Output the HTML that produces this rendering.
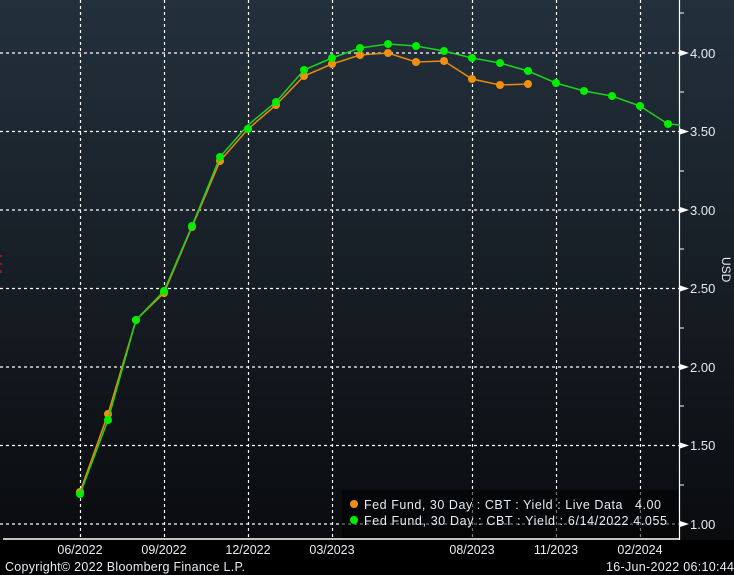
<!DOCTYPE html>
<html><head><style>
html,body{margin:0;padding:0;background:#000;}
svg{display:block;font-family:"Liberation Sans","DejaVu Sans",sans-serif;}
</style></head><body>
<svg width="734" height="575" viewBox="0 0 734 575" xmlns="http://www.w3.org/2000/svg">
<defs>
<linearGradient id="bg" x1="0" y1="0" x2="0" y2="1">
<stop offset="0" stop-color="#23303c"/>
<stop offset="0.5" stop-color="#161d24"/>
<stop offset="1" stop-color="#08090b"/>
</linearGradient>
</defs>
<rect x="0" y="0" width="734" height="575" fill="url(#bg)"/>
<rect x="0" y="540" width="734" height="35" fill="#000"/>
<g stroke="#fff" stroke-width="1.2" stroke-dasharray="3,3" fill="none">
<line x1="0" y1="53" x2="679" y2="53"/>
<line x1="0" y1="131.5" x2="679" y2="131.5"/>
<line x1="0" y1="210" x2="679" y2="210"/>
<line x1="0" y1="288.5" x2="679" y2="288.5"/>
<line x1="0" y1="367" x2="679" y2="367"/>
<line x1="0" y1="445.5" x2="679" y2="445.5"/>
<line x1="0" y1="524" x2="679" y2="524"/>
<line x1="80.5" y1="0" x2="80.5" y2="539"/>
<line x1="164.5" y1="0" x2="164.5" y2="539"/>
<line x1="248.5" y1="0" x2="248.5" y2="539"/>
<line x1="332.5" y1="0" x2="332.5" y2="539"/>
<line x1="472.5" y1="0" x2="472.5" y2="539"/>
<line x1="556.5" y1="0" x2="556.5" y2="539"/>
<line x1="640.5" y1="0" x2="640.5" y2="539"/>
</g>
<rect x="342" y="490" width="337" height="48" fill="#000" opacity="0.55"/>
<line x1="3" y1="539" x2="680" y2="539" stroke="#fff" stroke-width="1.5"/>
<line x1="679.5" y1="0" x2="679.5" y2="540" stroke="#fff" stroke-width="1.2"/>
<g stroke="#fff" stroke-width="1">
<line x1="679" y1="13" x2="684" y2="13"/><line x1="679" y1="92" x2="684" y2="92"/>
<line x1="679" y1="171" x2="684" y2="171"/><line x1="679" y1="249" x2="684" y2="249"/>
<line x1="679" y1="328" x2="684" y2="328"/><line x1="679" y1="406" x2="684" y2="406"/>
<line x1="679" y1="485" x2="684" y2="485"/>
</g>
<g fill="#fff">
<polygon points="680,50 689,53 680,56"/><polygon points="680,128.5 689,131.5 680,134.5"/>
<polygon points="680,207 689,210 680,213"/><polygon points="680,285.5 689,288.5 680,291.5"/>
<polygon points="680,364 689,367 680,370"/><polygon points="680,442.5 689,445.5 680,448.5"/>
<polygon points="680,521 689,524 680,527"/>
</g>
<g fill="#e6ecf2" font-size="13">
<text x="690" y="58">4.00</text><text x="690" y="136">3.50</text>
<text x="690" y="215">3.00</text><text x="690" y="293">2.50</text>
<text x="690" y="372">2.00</text><text x="690" y="450">1.50</text>
<text x="690" y="529">1.00</text>
<text transform="translate(722,257) rotate(90)" font-size="12">USD</text>
</g>
<g fill="#8a1c2a"><rect x="0" y="255" width="2" height="2"/><rect x="0" y="263" width="2" height="2"/><rect x="0" y="270" width="2" height="3"/></g>
<polyline fill="none" stroke="#e88a0a" stroke-width="1.5" points="80,492 108,414 136,320 164,293 192,227 220,161 248,129 276,105 304,76 332,64 360,55 388,53 416,62 444,61 472,79 500,85 528,84"/>
<g fill="#f09010">
<circle cx="80" cy="492" r="4"/><circle cx="108" cy="414" r="4"/><circle cx="136" cy="320" r="4"/><circle cx="164" cy="293" r="4"/><circle cx="192" cy="227" r="4"/><circle cx="220" cy="161" r="4"/><circle cx="248" cy="129" r="4"/><circle cx="276" cy="105" r="4"/><circle cx="304" cy="76" r="4"/><circle cx="332" cy="64" r="4"/><circle cx="360" cy="55" r="4"/><circle cx="388" cy="53" r="4"/><circle cx="416" cy="62" r="4"/><circle cx="444" cy="61" r="4"/><circle cx="472" cy="79" r="4"/><circle cx="500" cy="85" r="4"/><circle cx="528" cy="84" r="4"/>
</g>
<polyline fill="none" stroke="#1fd01f" stroke-width="1.5" points="80,494 108,420 136,320 164,291 192,226 220,157 248,125 276,102 304,70 332,58 360,48 388,44 416,46 444,51 472,58 500,63 528,71 556,83 584,91 612,96 640,106 668,124 680,125"/>
<g fill="#00ee00">
<circle cx="80" cy="494" r="4"/><circle cx="108" cy="420" r="4"/><circle cx="136" cy="320" r="4"/><circle cx="164" cy="291" r="4"/><circle cx="192" cy="226" r="4"/><circle cx="220" cy="157" r="4"/><circle cx="248" cy="129" r="4"/><circle cx="276" cy="102" r="4"/><circle cx="304" cy="70" r="4"/><circle cx="332" cy="58" r="4"/><circle cx="360" cy="48" r="4"/><circle cx="388" cy="44" r="4"/><circle cx="416" cy="46" r="4"/><circle cx="444" cy="51" r="4"/><circle cx="472" cy="58" r="4"/><circle cx="500" cy="63" r="4"/><circle cx="528" cy="71" r="4"/><circle cx="556" cy="83" r="4"/><circle cx="584" cy="91" r="4"/><circle cx="612" cy="96" r="4"/><circle cx="640" cy="106" r="4"/><circle cx="668" cy="124" r="4"/>
</g>
<circle cx="354" cy="504" r="4" fill="#f09010"/>
<circle cx="354" cy="520" r="4" fill="#00ee00"/>
<g fill="#e6ecf2" font-size="12.5">
<text x="364" y="509" xml:space="preserve" textLength="297" lengthAdjust="spacing">Fed Fund, 30 Day : CBT : Yield : Live Data   4.00</text>
<text x="364" y="525" xml:space="preserve" textLength="303" lengthAdjust="spacing">Fed Fund, 30 Day : CBT : Yield : 6/14/2022 4.055</text>
</g>
<g fill="#e6ecf2" font-size="12.5" text-anchor="middle">
<text x="80" y="554">06/2022</text><text x="164" y="554">09/2022</text><text x="248" y="554">12/2022</text>
<text x="332" y="554">03/2023</text><text x="472" y="554">08/2023</text><text x="556" y="554">11/2023</text>
<text x="640" y="554">02/2024</text>
</g>
<g fill="#e6ecf2" font-size="12.5">
<text x="5" y="571" textLength="240" lengthAdjust="spacing">Copyright© 2022 Bloomberg Finance L.P.</text>
<text x="606" y="571" textLength="128" lengthAdjust="spacing">16-Jun-2022 06:10:44</text>
</g>
</svg>
</body></html>
